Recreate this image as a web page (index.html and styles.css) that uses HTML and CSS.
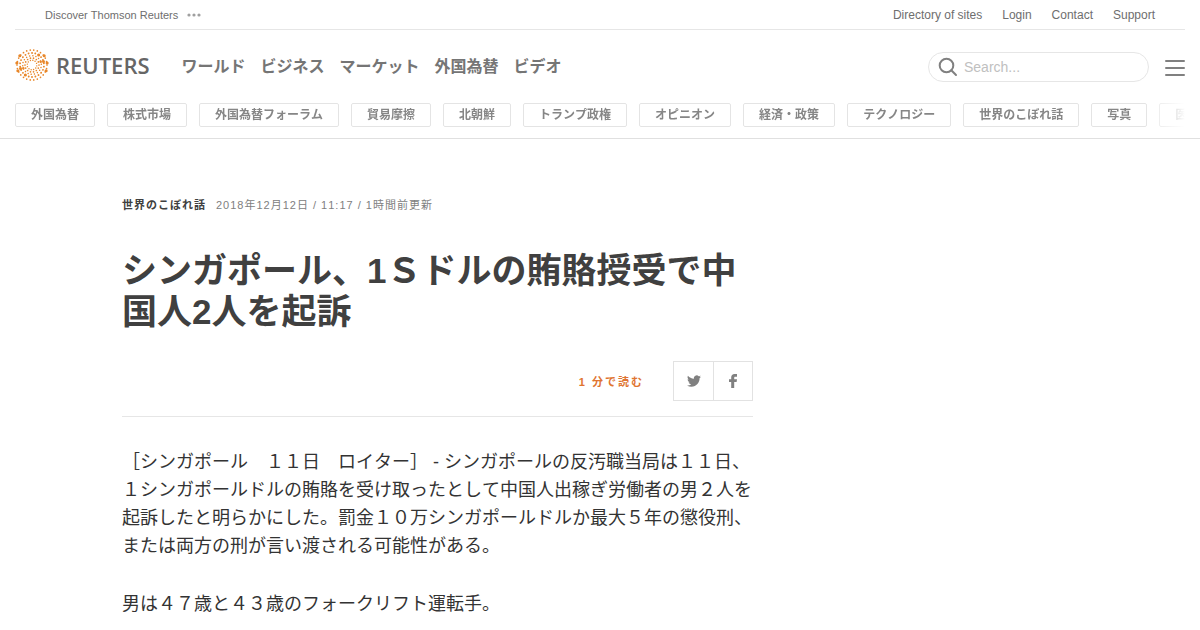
FILE: index.html
```html
<!DOCTYPE html>
<html lang="ja">
<head>
<meta charset="utf-8">
<title>シンガポール、1Ｓドルの賄賂授受で中国人2人を起訴 - Reuters</title>
<link rel="stylesheet" href="styles.css">
</head>
<body>
<header class="site-header">
  <div class="top-bar">
    <a class="discover" href="#">Discover Thomson Reuters
      <svg class="dots" width="14" height="4" viewBox="0 0 14 4" aria-hidden="true"><circle cx="2" cy="2" r="1.6"/><circle cx="7" cy="2" r="1.6"/><circle cx="12" cy="2" r="1.6"/></svg>
    </a>
    <nav class="top-links">
      <a href="#">Directory of sites</a>
      <a href="#">Login</a>
      <a href="#">Contact</a>
      <a href="#">Support</a>
    </nav>
  </div>
  <div class="main-bar">
    <a class="logo" href="#">
      <svg class="logo-mark" width="34" height="34" viewBox="-17 -17 34 34" aria-hidden="true">
        <circle r="15" stroke-width="1.7" pathLength="260" stroke-dasharray="0 10"/>
        <path d="M-12.2-9.2A15.300 15.300 0 0 0-12.2 9.200M12.200-9.200A15.300 15.300 0 0 1 12.200 9.200" stroke-width="3.1" pathLength="50" stroke-dasharray="0 10"/>
        <circle r="12" stroke-width="1.9" pathLength="220" stroke-dasharray="0 10" transform="rotate(8)"/>
        <path d="M-11.500 3.500A12 12 0 0 0-3 11.600M11.500-3.500A12 12 0 0 0 3-11.600" stroke-width="3" pathLength="30" stroke-dasharray="0 10"/>
        <circle r="9.300" stroke-width="1.500" pathLength="180" stroke-dasharray="0 10" transform="rotate(15)"/>
        <path d="M-8.700 3.200A9.300 9.300 0 0 0-3.200 8.700M8.700-3.200A9.300 9.300 0 0 0 3.200-8.700" stroke-width="2.500" pathLength="20" stroke-dasharray="0 10"/>
        <circle r="7" stroke-width="1.700" pathLength="140" stroke-dasharray="0 10"/>
        <circle r="4.800" stroke-width="1.400" pathLength="120" stroke-dasharray="0 10" transform="rotate(10)"/>
      </svg>
      <span class="logo-text">REUTERS</span>
    </a>
    <nav class="main-nav">
      <a href="#">ワールド</a>
      <a href="#">ビジネス</a>
      <a href="#">マーケット</a>
      <a href="#">外国為替</a>
      <a href="#">ビデオ</a>
    </nav>
    <form class="search">
      <svg width="20" height="20" viewBox="0 0 20 20" aria-hidden="true"><circle cx="8.5" cy="8.5" r="6.8"/><path d="M13.3 13.3L18 18"/></svg>
      <input type="search" placeholder="Search..." aria-label="Search">
    </form>
    <button class="menu" type="button" aria-label="Menu"><span></span><span></span><span></span></button>
  </div>
  <nav class="topics">
    <a href="#">外国為替</a>
    <a href="#">株式市場</a>
    <a href="#">外国為替フォーラム</a>
    <a href="#">貿易摩擦</a>
    <a href="#">北朝鮮</a>
    <a href="#">トランプ政権</a>
    <a href="#">オピニオン</a>
    <a href="#">経済・政策</a>
    <a href="#">テクノロジー</a>
    <a href="#">世界のこぼれ話</a>
    <a href="#">写真</a>
    <a href="#">医療</a>
  </nav>
</header>
<main class="article">
  <p class="meta"><a class="channel" href="#">世界のこぼれ話</a><span>2018年12月12日 / 11:17 / 1時間前更新</span></p>
  <h1>シンガポール、1Ｓドルの賄賂授受で中国人2人を起訴</h1>
  <div class="tools">
    <span class="read-time">1 分で読む</span>
    <div class="share">
      <button type="button" aria-label="Twitter"><svg width="14" height="14" viewBox="0 0 24 24" aria-hidden="true"><path d="M23.95 4.57a10 10 0 0 1-2.82.77 4.96 4.96 0 0 0 2.16-2.72c-.95.55-2 .95-3.13 1.18a4.92 4.92 0 0 0-8.38 4.48C7.69 8.1 4.07 6.13 1.64 3.16a4.82 4.82 0 0 0-.67 2.48c0 1.71.87 3.21 2.19 4.1a4.9 4.9 0 0 1-2.23-.62v.06a4.92 4.92 0 0 0 3.95 4.83 5 5 0 0 1-2.21.08 4.94 4.94 0 0 0 4.6 3.42A9.87 9.87 0 0 1 0 19.54a13.99 13.99 0 0 0 7.55 2.21c9.05 0 14-7.5 14-13.98 0-.21 0-.42-.02-.63a9.94 9.94 0 0 0 2.42-2.57z"/></svg></button>
      <button type="button" aria-label="Facebook"><svg width="14" height="14" viewBox="0 0 14 14" aria-hidden="true"><path d="M5.200 14V7.900H3V5.300h2.200V3.600C5.200 1.300 6.500 0 8.500 0H11v2.700H9.400C8.400 2.700 8.200 3.200 8.200 3.900v1.400H11l-.4 2.600H8.200V14z"/></svg></button>
    </div>
  </div>
  <div class="body">
    <p>［シンガポール　１１日　ロイター］ - シンガポールの反汚職当局は１１日、１シンガポールドルの賄賂を受け取ったとして中国人出稼ぎ労働者の男２人を起訴したと明らかにした。罰金１０万シンガポールドルか最大５年の懲役刑、または両方の刑が言い渡される可能性がある。</p>
    <p>男は４７歳と４３歳のフォークリフト運転手。</p>
  </div>
</main>
</body>
</html>
```
FILE: styles.css
```css
* { box-sizing: border-box; }
html { overflow: hidden; }
body {
  margin: 0;
  background: #fff;
  color: #333;
  font-family: "Liberation Sans", "Noto Sans CJK JP", sans-serif;
  font-kerning: none;
}
a { color: inherit; text-decoration: none; }
.site-header { border-bottom: 1px solid #e0e0e0; padding: 0 15px 11px; }
.top-bar {
  display: flex;
  justify-content: space-between;
  align-items: center;
  height: 30px;
  padding: 0 30px;
  border-bottom: 1px solid #e6e6e6;
  color: #6e6e6e;
  font-size: 12px;
}
.discover { display: flex; align-items: center; gap: 9px; font-size: 11px; }
.dots { fill: #a0a0a0; }
.top-links { display: flex; gap: 20px; }
.main-bar { display: flex; align-items: center; height: 73px; }
.logo { display: flex; align-items: center; gap: 7px; padding-bottom: 4px; }
.logo-mark { fill: none; stroke: #e8872a; stroke-linecap: round; }
.logo-text { color: #666; font: 600 22px/32px "Open Sans", sans-serif; }
.main-nav {
  display: flex;
  gap: 15px;
  margin: 0 auto 0 32px;
  padding-bottom: 4px;
  color: #757575;
  font-size: 16px;
  font-weight: 700;
}
.search {
  display: flex;
  align-items: center;
  gap: 6px;
  width: 221px;
  height: 30px;
  padding: 0 9px;
  border: 1px solid #e6e6e6;
  border-radius: 15px;
}
.search svg { flex: none; fill: none; stroke: #808080; stroke-width: 2; stroke-linecap: round; }
.search input {
  min-width: 0;
  flex: 1;
  padding: 0;
  border: 0;
  outline: 0;
  background: none;
  font: 14px "Liberation Sans", sans-serif;
}
.search input::placeholder { color: #c0c0c0; }
.menu {
  display: flex;
  flex-direction: column;
  gap: 5px;
  width: 20px;
  margin: 2px 0 0 16px;
  padding: 0;
  border: 0;
  background: none;
}
.menu span { height: 2px; background: #808080; border-radius: 1px; }
.topics {
  display: flex;
  gap: 12px;
  overflow: hidden;
  color: #868686;
  font-size: 12px;
  font-weight: 700;
  line-height: 22px;
  white-space: nowrap;
  mask-image: linear-gradient(to left, transparent, #000 40px);
}
.topics a { flex: none; padding: 0 15px; border: 1px solid #e4e4e4; border-radius: 2px; }
.article { width: 631px; max-width: 100%; margin: 56px 0 0 122px; }
.meta {
  display: flex;
  gap: 10px;
  margin: 0;
  color: #808080;
  font-size: 11px;
  line-height: 20px;
  letter-spacing: 1px;
}
.channel { color: #404040; font-weight: 700; }
h1 { margin: 35px 0 29px; color: #404040; font-size: 35px; line-height: 41px; }
.tools {
  display: flex;
  align-items: center;
  justify-content: flex-end;
  gap: 29px;
  padding-bottom: 15px;
  border-bottom: 1px solid #e6e6e6;
}
.read-time { color: #e07430; font-size: 11px; font-weight: 700; letter-spacing: 2px; }
.share { display: flex; border: 1px solid #e2e2e2; }
.share button {
  display: grid;
  place-items: center;
  width: 39px;
  height: 38px;
  padding: 0;
  border: 0;
  background: none;
}
.share button + button { border-left: 1px solid #e2e2e2; }
.share svg { fill: #808080; }
.body { padding-top: 31px; font-size: 18px; line-height: 28px; }
.body p { margin: 0 0 30px; }
```
